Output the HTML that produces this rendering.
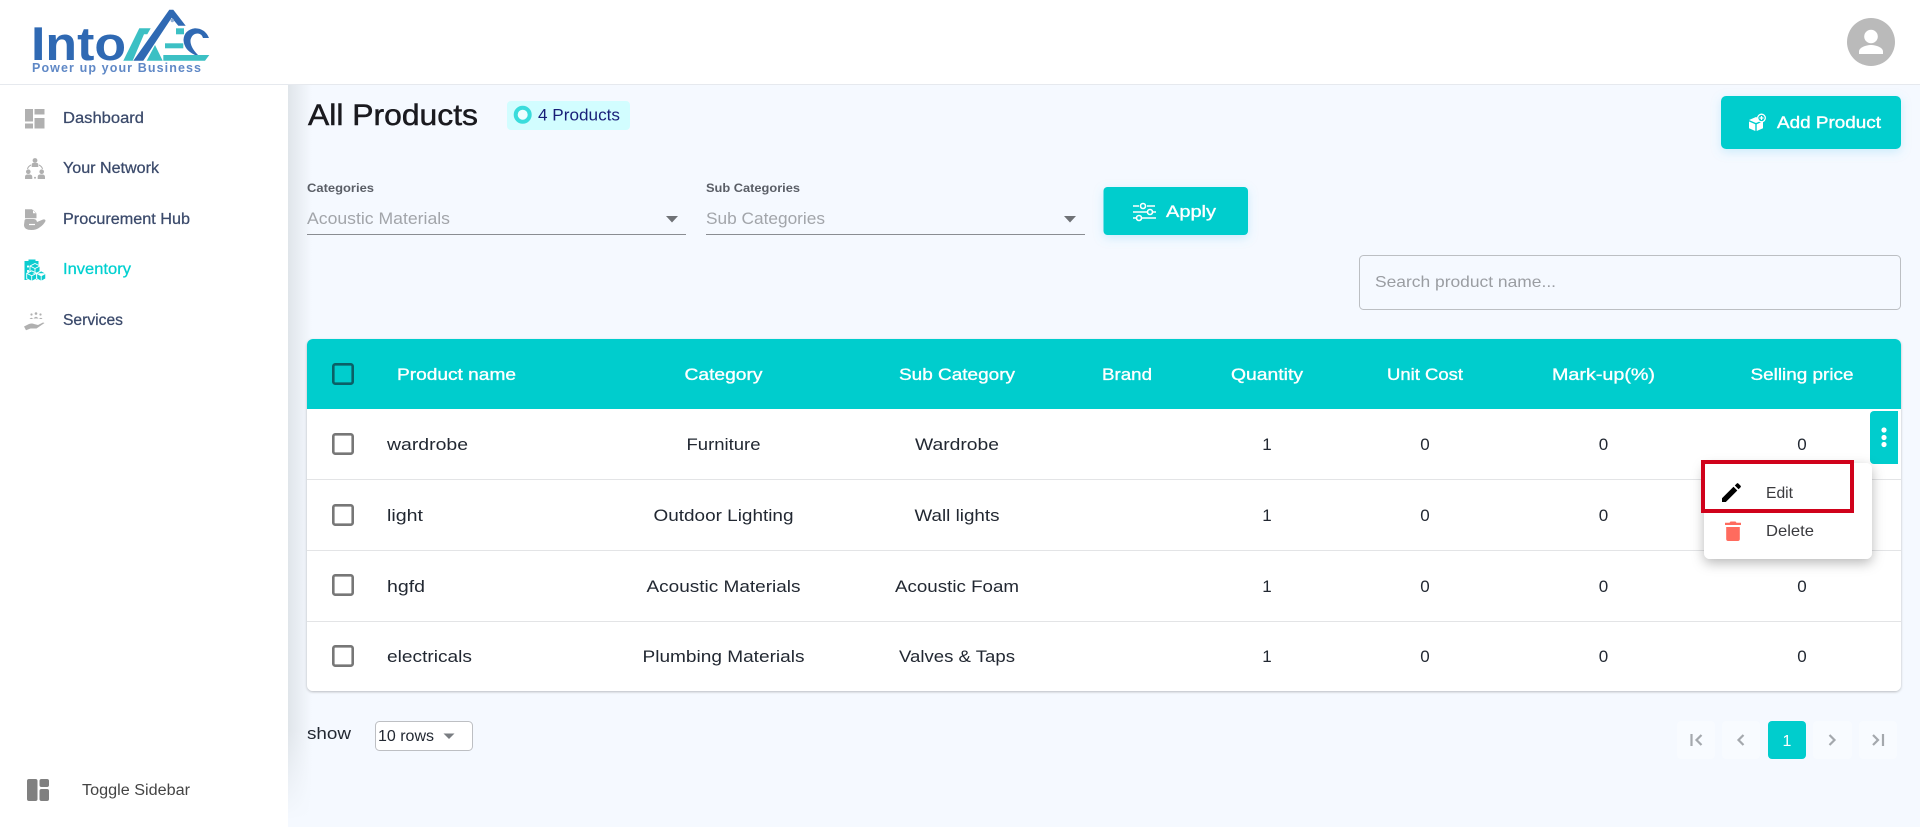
<!DOCTYPE html>
<html lang="en"><head><meta charset="utf-8"><title>All Products</title>
<style>
html,body{margin:0;padding:0;width:1920px;height:827px;overflow:hidden;background:#f5f9ff}
svg{display:block}
text{font-family:"Liberation Sans",sans-serif}
.nav{font-size:15.5px;fill:#3b4a6b;stroke:#3b4a6b;stroke-width:.25}
.th{font-size:17px;fill:#fff;stroke:#fff;stroke-width:.35;text-anchor:middle}
.td{font-size:17px;fill:#222832;text-anchor:middle}
.tl{font-size:17px;fill:#222832}
.cb{fill:#fff;stroke:#777;stroke-width:2.6}
.pg{fill:#f8fbff}
.pi{fill:none;stroke:#a4a8ad;stroke-width:2.2}
</style></head><body>
<svg width="1920" height="827" viewBox="0 0 1920 827" xmlns="http://www.w3.org/2000/svg">
<defs>
<linearGradient id="sh" x1="0" x2="1" y1="0" y2="0"><stop offset="0" stop-color="#e0e5ea"/><stop offset="1" stop-color="#f5f9ff"/></linearGradient>
<linearGradient id="fd" x1="0" x2="0" y1="0" y2="1"><stop offset="0" stop-color="#f5f9ff" stop-opacity="0"/><stop offset="1" stop-color="#f5f9ff"/></linearGradient>
<filter id="ms" x="-20%" y="-20%" width="140%" height="150%"><feDropShadow dx="0" dy="4" stdDeviation="6" flood-color="#000" flood-opacity=".28"/></filter>
<filter id="bs" x="-20%" y="-30%" width="140%" height="170%"><feDropShadow dx="0" dy="3" stdDeviation="5" flood-color="#5cc8f0" flood-opacity=".28"/></filter>
<filter id="ts" x="-2%" y="-2%" width="104%" height="106%"><feDropShadow dx="0" dy="1" stdDeviation="1.2" flood-color="#000" flood-opacity=".25"/></filter>
</defs>
<rect width="1920" height="827" fill="#f5f9ff"/>
<rect x="288" y="85" width="24" height="742" fill="url(#sh)"/>
<rect x="288" y="730" width="24" height="90" fill="url(#fd)"/>
<rect x="288" y="820" width="24" height="7" fill="#f5f9ff"/>
<rect width="1920" height="84" fill="#fff"/>
<rect y="84" width="1920" height="1" fill="#e6e9ee"/>
<rect y="85" width="288" height="742" fill="#fff"/>

<!-- logo -->
<text x="31" y="60" font-size="47" font-weight="700" fill="#2f69b3" textLength="95" lengthAdjust="spacingAndGlyphs">Into</text>
<polygon points="123.300,60.700 139.300,28.300 150.700,28.300 147.300,34.300 144,34.300 132.700,60.700" fill="#3cc0c4"/>
<polygon points="146.700,60.700 155,45 162.700,60.700" fill="#3cc0c4"/>
<rect x="176" y="28.300" width="8" height="6" fill="#3cc0c4"/>
<rect x="165" y="43.300" width="18.300" height="5" fill="#3cc0c4"/>
<polygon points="163.300,55 209.300,55 205,60.700 163.300,60.700" fill="#3cc0c4"/>
<polygon points="133.300,60.700 169.300,9.700 173.300,9.700 185.700,25.700 178.300,25.700 171.700,17.700 143.300,60.700" fill="#2f69b3"/>
<circle cx="172.300" cy="20.500" r="1.700" fill="#8faed6"/>
<path d="M209 38 Q205 28.500 195 28.300 Q184 30 183.500 40 Q184 50 195 55 H198 Q190 47 190.500 40 Q192 33.500 198 33.500 Q202 34 203 38 Z" fill="#2f69b3"/>
<text x="32" y="72" font-size="12.500" font-weight="700" fill="#5f88c6" textLength="169" lengthAdjust="spacing">Power up your Business</text>

<!-- sidebar icons -->
<g fill="#b0b0b0">
<rect x="25" y="109" width="8" height="12.500"/><rect x="25" y="123.500" width="8" height="5"/><rect x="34.500" y="109" width="10" height="5.500"/><rect x="34.500" y="118" width="10" height="10.500"/>
<circle cx="35" cy="160.500" r="2.400"/><path d="M31.700 167 v-2.500 q0-1.500 1.500-1.500 h3.600 q1.500 0 1.500 1.500 v2.500z"/>
<circle cx="28.300" cy="171.700" r="2.300"/><circle cx="41.700" cy="171.700" r="2.300"/>
<path d="M25 179 v-2 q0-2.500 2.500-2.500 h2 q2.800 0 2.800 2.500 v2z M37.700 179 v-2 q0-2.500 2.500-2.500 h2 q2.800 0 2.800 2.500 v2z"/>
<circle cx="35" cy="177.700" r="1"/>
<path d="M31 165 q-3 1.500 -3.500 4 M39 165 q3 1.500 3.500 4" fill="none" stroke="#b0b0b0" stroke-width="1"/>
<path d="M25 209.300 h7 l4.500 4.500 v4.500 h-11.500z M33 209.800 v3.500 h3.500z" fill-rule="evenodd"/>
<path d="M24.500 221 q0-2 2-2 h7 q3 0 3.500 3 l6-2.500 q2.500-.5 2.500 1.500 q-2 4-6 6.500 q-3 2.500-8 2.500 q-7.500 0-7.500-5z"/>
<path d="M29 224.500 h6" stroke="#fff" stroke-width="1.200" fill="none"/>
<circle cx="36" cy="313.500" r="1.300"/><circle cx="31.500" cy="314.500" r="1.100"/><circle cx="40.500" cy="314.500" r="1.100"/>
<path d="M33.500 318.500 q2.500-3.500 5 0z M29.500 319 q2-2.500 3.500 0z M39 319 q2-2.500 3.500 0z"/>
<path d="M24 326.500 l5-2.500 q3-1 5 0 l4 1 5-2.500 1.500 .5 -8 5.500 h-6 l-4.500 1.800z"/>
</g>
<g>
<path d="M24.500 261 h4 v-1.500 h7 v1.500 h3 v19 h-14z" fill="#0ccdd0"/>
<g fill="#fff"><circle cx="28" cy="266.500" r="1.100"/><circle cx="28" cy="271" r="1.100"/><circle cx="28" cy="275.500" r="1.100"/></g>
<g fill="#0ccdd0" stroke="#fff" stroke-width=".9">
<path d="M35 263.500 l5 2.500 v5.500 l-5 2.500 -5-2.500 v-5.500z M30 266 l5 2.500 5-2.500 M35 268.500 v5.500"/>
<path d="M31.700 270.800 l5 2.500 v5.500 l-5 2.500 -5-2.500 v-5.500z M26.700 273.300 l5 2.500 5-2.500 M31.700 275.800 v5"/>
<path d="M41.200 270.800 l4.500 2.500 v5.500 l-4.500 2.500 -4.500-2.500 v-5.500z M36.700 273.300 l4.500 2.500 4.500-2.500 M41.200 275.800 v5"/>
</g>
</g>

<text class="nav" x="63" y="123" textLength="81" lengthAdjust="spacingAndGlyphs">Dashboard</text>
<text class="nav" x="63" y="173" textLength="96" lengthAdjust="spacingAndGlyphs">Your Network</text>
<text class="nav" x="63" y="224" textLength="127" lengthAdjust="spacingAndGlyphs">Procurement Hub</text>
<text class="nav" x="63" y="274" textLength="68" lengthAdjust="spacingAndGlyphs" style="fill:#00d0d0;stroke:#00d0d0">Inventory</text>
<text class="nav" x="63" y="325" textLength="60" lengthAdjust="spacingAndGlyphs">Services</text>

<rect x="27" y="779" width="10.500" height="22" rx="2" fill="#808080"/><rect x="39.500" y="779" width="9.500" height="8" rx="2" fill="#808080"/><rect x="39.500" y="789" width="9.500" height="12" rx="2" fill="#808080"/>
<text x="82" y="795" font-size="15.500" fill="#444" textLength="108" lengthAdjust="spacingAndGlyphs">Toggle Sidebar</text>

<!-- avatar -->
<circle cx="1871" cy="42" r="24" fill="#bababa"/>
<circle cx="1871" cy="36.500" r="6.800" fill="#fff"/>
<path d="M1859 54 v-2.500 c0-4 7-6.500 12-6.500 s12 2.500 12 6.500 v2.500z" fill="#fff"/>

<!-- heading -->
<text x="308" y="125" font-size="30" fill="#1a1a1f" stroke="#1a1a1f" stroke-width=".5" textLength="170" lengthAdjust="spacingAndGlyphs">All Products</text>
<rect x="507" y="101" width="123" height="29" rx="4" fill="#d2fdff"/>
<circle cx="522.700" cy="114.700" r="7" fill="#f0feff" stroke="#3adcdc" stroke-width="4"/>
<text x="538" y="120.500" font-size="16.500" fill="#181f78" textLength="82" lengthAdjust="spacingAndGlyphs">4 Products</text>

<!-- add product -->
<rect x="1721" y="96" width="180" height="53" rx="5" fill="#00cdcd" filter="url(#bs)"/>
<path d="M1749 120 l7-3 7 3 -7 3z M1749 121.500 l6.300 2.700 v6.800 l-6.300-2.700z M1763 121.500 l-6.300 2.700 v6.800 l6.300-2.700z" fill="#fff"/>
<circle cx="1761.500" cy="118" r="3.800" fill="#00cdcd" stroke="#fff" stroke-width="1.300"/><path d="M1761.500 116 v4 M1759.500 118 h4" stroke="#fff" stroke-width="1.200"/>
<text x="1777" y="128" font-size="17" fill="#fff" stroke="#fff" stroke-width=".4" textLength="104" lengthAdjust="spacingAndGlyphs">Add Product</text>

<!-- filters -->
<text x="307" y="192" font-size="12" font-weight="700" fill="#5a5e66" textLength="67" lengthAdjust="spacingAndGlyphs">Categories</text>
<text x="706" y="192" font-size="12" font-weight="700" fill="#5a5e66" textLength="94" lengthAdjust="spacingAndGlyphs">Sub Categories</text>
<text x="307" y="224" font-size="17" fill="#a2a5aa" textLength="143" lengthAdjust="spacingAndGlyphs">Acoustic Materials</text>
<text x="706" y="224" font-size="17" fill="#a2a5aa" textLength="119" lengthAdjust="spacingAndGlyphs">Sub Categories</text>
<rect x="307" y="234" width="379" height="1" fill="#8a8d92"/>
<rect x="706" y="234" width="379" height="1" fill="#8a8d92"/>
<path d="M666 216 h12 l-6 6.500z M1064 216 h12 l-6 6.500z" fill="#6f7276"/>
<rect x="1103.500" y="187" width="144.500" height="48" rx="4" fill="#00cdcd" filter="url(#bs)"/>
<g fill="none" stroke="#fff" stroke-width="1.600">
<path d="M1133 206 h6 M1147 206 h8 M1133 212 h14 M1153 212 h3 M1133 218 h3 M1142 218 h14"/>
<circle cx="1143" cy="206" r="2.500"/><circle cx="1150" cy="212" r="2.500"/><circle cx="1139" cy="218" r="2.500"/>
</g>
<text x="1166" y="217" font-size="17" fill="#fff" stroke="#fff" stroke-width=".35" textLength="50" lengthAdjust="spacingAndGlyphs">Apply</text>

<!-- search -->
<rect x="1359.500" y="255.500" width="541" height="54" rx="4" fill="#f5f9ff" stroke="#bcbfc3"/>
<text x="1375" y="287" font-size="16" fill="#9a9da2" textLength="181" lengthAdjust="spacingAndGlyphs">Search product name...</text>

<!-- table -->
<rect x="307" y="339" width="1594" height="352" rx="6" fill="#fff" filter="url(#ts)"/>
<path d="M307 409 v-64 a6 6 0 0 1 6-6 h1582 a6 6 0 0 1 6 6 v64z" fill="#00cdcd"/>
<rect x="307" y="479" width="1594" height="1" fill="#e3e4e6"/>
<rect x="307" y="550" width="1594" height="1" fill="#e3e4e6"/>
<rect x="307" y="621" width="1594" height="1" fill="#e3e4e6"/>
<rect x="333.300" y="364.300" width="19.400" height="19.400" rx="2" fill="none" stroke="#0b5f66" stroke-width="2.600"/>
<text class="th" x="456.500" y="380" textLength="119" lengthAdjust="spacingAndGlyphs">Product name</text>
<text class="th" x="723.500" y="380" textLength="78" lengthAdjust="spacingAndGlyphs">Category</text>
<text class="th" x="957" y="380" textLength="116" lengthAdjust="spacingAndGlyphs">Sub Category</text>
<text class="th" x="1127" y="380" textLength="50" lengthAdjust="spacingAndGlyphs">Brand</text>
<text class="th" x="1267" y="380" textLength="72" lengthAdjust="spacingAndGlyphs">Quantity</text>
<text class="th" x="1425" y="380" textLength="76" lengthAdjust="spacingAndGlyphs">Unit Cost</text>
<text class="th" x="1603.500" y="380" textLength="103" lengthAdjust="spacingAndGlyphs">Mark-up(%)</text>
<text class="th" x="1802" y="380" textLength="103" lengthAdjust="spacingAndGlyphs">Selling price</text>

<rect class="cb" x="333.300" y="434.300" width="19.400" height="19.400" rx="2"/>
<rect class="cb" x="333.300" y="505.300" width="19.400" height="19.400" rx="2"/>
<rect class="cb" x="333.300" y="575.300" width="19.400" height="19.400" rx="2"/>
<rect class="cb" x="333.300" y="646.300" width="19.400" height="19.400" rx="2"/>

<text class="tl" x="387" y="450" textLength="81" lengthAdjust="spacingAndGlyphs">wardrobe</text>
<text class="td" x="723.500" y="450" textLength="74" lengthAdjust="spacingAndGlyphs">Furniture</text>
<text class="td" x="957" y="450" textLength="84" lengthAdjust="spacingAndGlyphs">Wardrobe</text>
<text class="td" x="1267" y="450">1</text><text class="td" x="1425" y="450">0</text><text class="td" x="1603.500" y="450">0</text><text class="td" x="1802" y="450">0</text>

<text class="tl" x="387" y="521" textLength="36" lengthAdjust="spacingAndGlyphs">light</text>
<text class="td" x="723.500" y="521" textLength="140" lengthAdjust="spacingAndGlyphs">Outdoor Lighting</text>
<text class="td" x="957" y="521" textLength="85" lengthAdjust="spacingAndGlyphs">Wall lights</text>
<text class="td" x="1267" y="521">1</text><text class="td" x="1425" y="521">0</text><text class="td" x="1603.500" y="521">0</text>

<text class="tl" x="387" y="592" textLength="38" lengthAdjust="spacingAndGlyphs">hgfd</text>
<text class="td" x="723.500" y="592" textLength="154" lengthAdjust="spacingAndGlyphs">Acoustic Materials</text>
<text class="td" x="957" y="592" textLength="124" lengthAdjust="spacingAndGlyphs">Acoustic Foam</text>
<text class="td" x="1267" y="592">1</text><text class="td" x="1425" y="592">0</text><text class="td" x="1603.500" y="592">0</text><text class="td" x="1802" y="592">0</text>

<text class="tl" x="387" y="662" textLength="85" lengthAdjust="spacingAndGlyphs">electricals</text>
<text class="td" x="723.500" y="662" textLength="162" lengthAdjust="spacingAndGlyphs">Plumbing Materials</text>
<text class="td" x="957" y="662" textLength="116" lengthAdjust="spacingAndGlyphs">Valves &amp; Taps</text>
<text class="td" x="1267" y="662">1</text><text class="td" x="1425" y="662">0</text><text class="td" x="1603.500" y="662">0</text><text class="td" x="1802" y="662">0</text>

<!-- kebab -->
<path d="M1898 411 h-24 a4 4 0 0 0-4 4 v45 a4 4 0 0 0 4 4 h24z" fill="#00cdcd"/>
<circle cx="1884" cy="430" r="2.600" fill="#fff"/><circle cx="1884" cy="437.500" r="2.600" fill="#fff"/><circle cx="1884" cy="444.500" r="2.600" fill="#fff"/>

<!-- menu -->
<rect x="1704" y="463" width="168" height="96" rx="6" fill="#fff" filter="url(#ms)"/>
<path d="M1722 502 v-3.800 l11.500-11.500 3.800 3.800 -11.500 11.500z M1734.800 485.500 l2-2 q.8-.7 1.500 0 l2.300 2.300 q.7.7 0 1.500 l-2 2z" fill="#000"/>
<path d="M1725 525 h16 v-2.200 h-4.500 l-1-1.300 h-5 l-1 1.300 h-4.500z M1726.200 527 h13.600 v12 q0 2-2 2 h-9.600 q-2 0-2-2z" fill="#ff6b5e"/>
<text x="1766" y="498" font-size="16" fill="#3a3a3e" textLength="27" lengthAdjust="spacingAndGlyphs">Edit</text>
<text x="1766" y="536" font-size="16" fill="#3a3a3e" textLength="48" lengthAdjust="spacingAndGlyphs">Delete</text>
<rect x="1703" y="462" width="149" height="49" fill="none" stroke="#d0021b" stroke-width="4"/>

<!-- footer -->
<text x="307" y="739" font-size="17" fill="#222832" textLength="44" lengthAdjust="spacingAndGlyphs">show</text>
<rect x="375.500" y="721.500" width="97" height="29" rx="4" fill="#fff" stroke="#bdbfc3"/>
<text x="378" y="741" font-size="16" fill="#222832" textLength="56" lengthAdjust="spacingAndGlyphs">10 rows</text>
<path d="M443.500 733.500 h11 l-5.500 5.500z" fill="#7a7d82"/>

<rect class="pg" x="1677" y="721" width="38" height="38" rx="4"/>
<rect class="pg" x="1722" y="721" width="38" height="38" rx="4"/>
<rect x="1768" y="721" width="38" height="38" rx="4" fill="#00cdcd"/>
<rect class="pg" x="1813" y="721" width="39" height="38" rx="4"/>
<rect class="pg" x="1859" y="721" width="38" height="38" rx="4"/>
<path class="pi" d="M1691.500 734 v12 M1701.500 735 l-5 5 5 5"/>
<path class="pi" d="M1743.500 735 l-5 5 5 5"/>
<text x="1787" y="746" font-size="16" fill="#fff" text-anchor="middle">1</text>
<path class="pi" d="M1829.500 735 l5 5 -5 5"/>
<path class="pi" d="M1873 735 l5 5 -5 5 M1883 734 v12"/>
</svg>
</body></html>
